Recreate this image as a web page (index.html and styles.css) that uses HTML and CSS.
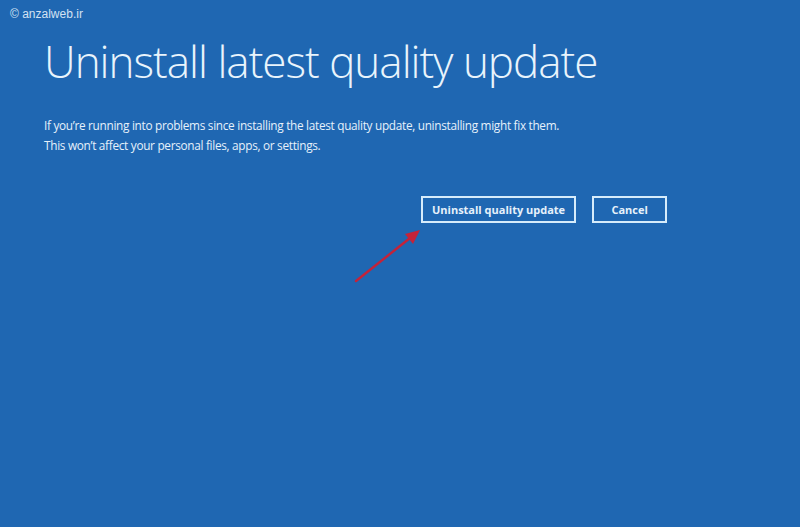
FILE: index.html
```html
<!DOCTYPE html>
<html>
<head>
    <title>Uninstall latest quality update</title>
    <link rel="stylesheet" href="styles.css">
</head>
<body>
    <div class="watermark">&copy; anzalweb.ir</div>

    <div class="screen">
        <h1>Uninstall latest quality update</h1>
        <p class="desc">
            If you’re running into problems since installing the latest quality update, uninstalling might fix them.<br>
            This won’t affect your personal files, apps, or settings.
        </p>

        <div class="actions">
            <button class="win-btn" type="button">Uninstall quality update</button>
            <button class="win-btn cancel" type="button">Cancel</button>
        </div>
    </div>

    <!-- pointer arrow drawn over the screen -->
    <svg class="arrow" width="80" height="70" viewBox="0 0 80 70">
        <line x1="6" y1="61" x2="60" y2="18" stroke="#c4233a" stroke-width="2.4" stroke-linecap="round"/>
        <polygon points="70,10 55,14 63,24" fill="#c4233a"/>
    </svg>
</body>
</html>
```

FILE: styles.css
```css
html, body {
    height: 100%;
}

body {
    margin: 0;
    background-color: #1f67b2;
    color: #e6f1fb;
    font-family: "Open Sans", "Noto Sans", sans-serif;
    position: relative;
    overflow: hidden;
}

.watermark {
    position: absolute;
    top: 7px;
    left: 10px;
    font-size: 12px;
    color: #d3e2f2;
    font-family: "Liberation Sans", Arial, sans-serif;
}

.screen {
    padding: 30px 0 0 44px;
}

h1 {
    margin: 0;
    font-size: 44px;
    font-weight: 300;
    letter-spacing: -1px;
    color: #e9f4fc;
    line-height: 62px;
}

.desc {
    margin: 23px 0 0;
    font-size: 11.8px;
    line-height: 20px;
    letter-spacing: -0.3px;
    color: #e6f1fb;
}

.actions {
    display: flex;
    gap: 16px;
    margin: 41px 0 0 377px;
}

.win-btn {
    height: 27px;
    padding: 0 9px;
    background: transparent;
    border: 2px solid #d6ecfb;
    color: #e6f1fb;
    font-family: "Open Sans", "Noto Sans", sans-serif;
    font-size: 11px;
    font-weight: 700;
    cursor: pointer;
}

.cancel {
    min-width: 75px;
}

.arrow {
    position: absolute;
    left: 350px;
    top: 220px;
}
```
